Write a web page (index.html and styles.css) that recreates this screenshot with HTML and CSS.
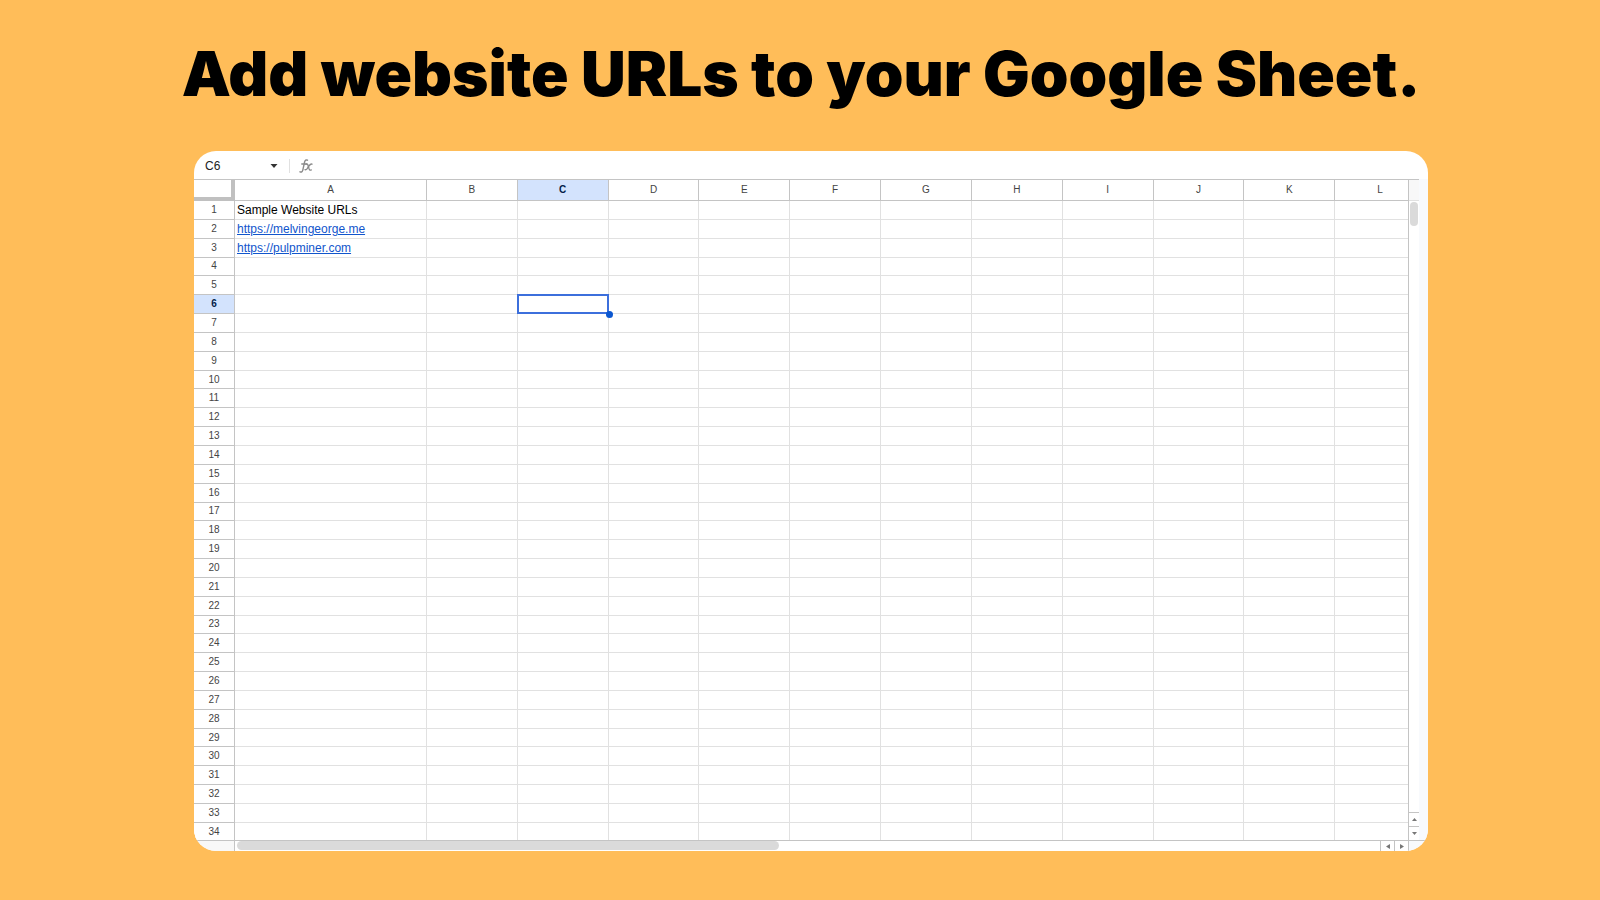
FILE: index.html
```html
<!DOCTYPE html>
<html lang="en">
<head>
  <meta charset="UTF-8" />
  <meta name="viewport" content="width=device-width, initial-scale=1.0" />
  <title>Add website URLs to your Google Sheet.</title>
  <link rel="stylesheet" href="styles.css">
</head>
<body>
  <h1 class="title">Add website URLs to your Google Sheet.</h1>

  <main class="sheet">
    <div class="formula-bar">
      <input type="text" class="name-box" value="C6" aria-label="Name box" />
      <button type="button" class="name-menu" aria-label="Named ranges">
        <svg width="8" height="4" viewBox="0 0 8 4"><path d="M.5 0h7L4 4z" fill="#333" /></svg>
      </button>
      <label class="fx" for="formula">
        <svg width="14" height="14" viewBox="0 0 14 14" fill="none" stroke="#8a8a8a" stroke-width="1.4" stroke-linecap="round" role="img" aria-label="Formula">
          <path d="M8.5 1.2C7 .5 6 1.2 5.6 3L3.8 11.2C3.4 12.9 2.4 13.4 1 12.8" />
          <path d="M2.8 5h4.6" />
          <path d="M7 5.2c1.3-.5 1.7 0 2.1 1.3l1 3.4c.4 1.2 1 1.5 2.2 1" />
          <path d="M13 5.1c-1.2-.3-2 .4-3 1.8L8.2 9.6c-.7 1-1.3 1.4-2.2 1.1" />
        </svg>
      </label>
      <input type="text" class="formula" id="formula" />
    </div>

    <div class="view">
      <div class="grid">
        <table>
          <colgroup>
            <col class="col-num" />
            <col class="col-a" />
            <col span="11" />
          </colgroup>
          <thead>
            <tr id="letters"><td class="corner"></td></tr>
          </thead>
          <tbody id="rows"></tbody>
        </table>
      </div>
      <div class="scroll-y">
        <div class="scroll-head"></div>
        <div class="thumb-y"></div>
        <button type="button" class="step" aria-label="Scroll up">
          <svg width="5" height="3" viewBox="0 0 5 3"><path d="M0 3h5L2.5 0z" /></svg>
        </button>
        <button type="button" class="step" aria-label="Scroll down">
          <svg width="5" height="3" viewBox="0 0 5 3"><path d="M0 0h5L2.5 3z" /></svg>
        </button>
      </div>
    </div>

    <div class="scroll-x">
      <div class="scroll-corner"></div>
      <div class="track-x"><div class="thumb-x"></div></div>
      <button type="button" class="step" aria-label="Scroll left">
        <svg width="4" height="5" viewBox="0 0 4 5"><path d="M4 0v5L0 2.5z" /></svg>
      </button>
      <button type="button" class="step" aria-label="Scroll right">
        <svg width="4" height="5" viewBox="0 0 4 5"><path d="M0 0v5l4-2.5z" /></svg>
      </button>
      <div class="scroll-end"></div>
    </div>
  </main>

  <script>
    const columns = 'ABCDEFGHIJKL'.split('');
    const rowCount = 34;
    const selected = { col: 'C', row: 6 };
    const cells = {
      A1: 'Sample Website URLs',
      A2: '<a href="https://melvingeorge.me">https://melvingeorge.me</a>',
      A3: '<a href="https://pulpminer.com">https://pulpminer.com</a>'
    };

    const letters = document.getElementById('letters');
    columns.forEach(col => {
      const active = col === selected.col ? ' class="active"' : '';
      letters.insertAdjacentHTML('beforeend', `<th scope="col"${active}>${col}</th>`);
    });

    let html = '';
    for (let row = 1; row <= rowCount; row++) {
      html += `<tr><th scope="row"${row === selected.row ? ' class="active"' : ''}>${row}</th>`;
      columns.forEach(col => {
        const isSelected = col === selected.col && row === selected.row;
        html += isSelected
          ? '<td class="selected"><span class="handle"></span></td>'
          : `<td>${cells[col + row] || ''}</td>`;
      });
      html += '</tr>';
    }
    document.getElementById('rows').innerHTML = html;
  </script>
</body>
</html>
```

FILE: styles.css
```css
:root {
  --bg: #ffbd59;
  --line: #e1e1e1;
  --head-line: #c4c4c4;
  --blue: #0b57d0;
  --active: #d3e3fd;
  --strip: #f8fafd;
}

* {
  box-sizing: border-box;
}

body {
  margin: 0;
  height: 100vh;
  padding: 36px 172px 49px 194px;
  display: flex;
  flex-direction: column;
  background-color: var(--bg);
  font-family: "Liberation Sans", Arial, sans-serif;
}

.title {
  margin: 0 -40px 39px -60px;
  font-family: Inter, sans-serif;
  font-size: 62px;
  line-height: 76px;
  font-weight: 900;
  text-align: center;
  white-space: nowrap;
  color: #000;
}

.sheet {
  flex: 1;
  min-height: 0;
  display: flex;
  flex-direction: column;
  overflow: hidden;
  border-radius: 22px;
  background-color: #fff;
}

button,
input {
  margin: 0;
  padding: 0;
  border: 0;
  background: none;
  font: inherit;
}

.formula-bar {
  display: flex;
  align-items: center;
  height: 28px;
  padding-top: 2px;
}

.name-box {
  width: 64px;
  padding-left: 11px;
  font-size: 12px;
  color: #222;
}

.name-menu {
  display: flex;
  justify-content: center;
  width: 31px;
}

.fx {
  display: flex;
  padding-left: 9px;
  border-left: 1px solid var(--line);
}

.formula {
  flex: 1;
  padding-left: 8px;
}

.view {
  flex: 1;
  min-height: 0;
  display: flex;
  padding-right: 9px;
  background-color: var(--strip);
}

.grid {
  flex: 1;
  min-width: 0;
  overflow: hidden;
  border-top: 1px solid var(--head-line);
  background-color: #fff;
}

/* last column and last row run on under the scrollbars */
table {
  width: calc(100% + 18px);
  height: calc(100% + 2px);
  table-layout: fixed;
  border-collapse: separate;
  border-spacing: 0;
}

.col-num {
  width: 41px;
}

.col-a {
  width: 192px;
}

th,
td {
  padding: 0;
  border-right: 1px solid var(--line);
  border-bottom: 1px solid var(--line);
  line-height: 16px;
}

th {
  border-color: var(--head-line);
  font-size: 10px;
  font-weight: normal;
  color: #444;
}

td {
  padding-left: 2px;
  font-size: 12px;
  white-space: nowrap;
}

td a {
  color: #1155cc;
}

thead tr {
  height: 21px;
}

.corner {
  border-right: 4px solid #c0c0c0;
  border-bottom: 4px solid #c0c0c0;
}

th.active {
  background-color: var(--active);
  font-weight: bold;
  color: #041e49;
}

.selected {
  position: relative;
}

.selected::before {
  content: "";
  position: absolute;
  inset: -1px;
  border: 2px solid #3c6fdc;
}

.handle {
  position: absolute;
  right: -5px;
  bottom: -5px;
  width: 7px;
  height: 7px;
  border-radius: 50%;
  background-color: var(--blue);
}

.step {
  display: flex;
  align-items: center;
  justify-content: center;
  background-color: #fff;
  fill: #777;
}

.scroll-y {
  display: flex;
  flex-direction: column;
  width: 11px;
  border-top: 1px solid var(--head-line);
  border-left: 1px solid var(--head-line);
  background-color: #fff;
}

.scroll-head {
  height: 21px;
  border-bottom: 1px solid var(--line);
  background-color: #f8f8f8;
}

.thumb-y {
  width: 8px;
  height: 24px;
  margin: 1px 1px auto;
  border-radius: 4px;
  background-color: #dadada;
}

.scroll-y .step {
  height: 14px;
  border-top: 1px solid var(--head-line);
}

.scroll-x {
  display: flex;
  height: 11px;
  border-top: 1px solid var(--head-line);
}

.scroll-corner {
  width: 41px;
  border-right: 1px solid var(--head-line);
  background-color: #f8f8f8;
}

.track-x {
  flex: 1;
  padding: 0 2px;
}

.thumb-x {
  width: 47.5%;
  height: 9px;
  border-radius: 5px;
  background-color: #dadada;
}

.scroll-x .step {
  width: 14px;
  border-left: 1px solid var(--head-line);
}

.scroll-end {
  width: 20px;
  border-left: 1px solid var(--head-line);
  background-color: var(--strip);
}
```
